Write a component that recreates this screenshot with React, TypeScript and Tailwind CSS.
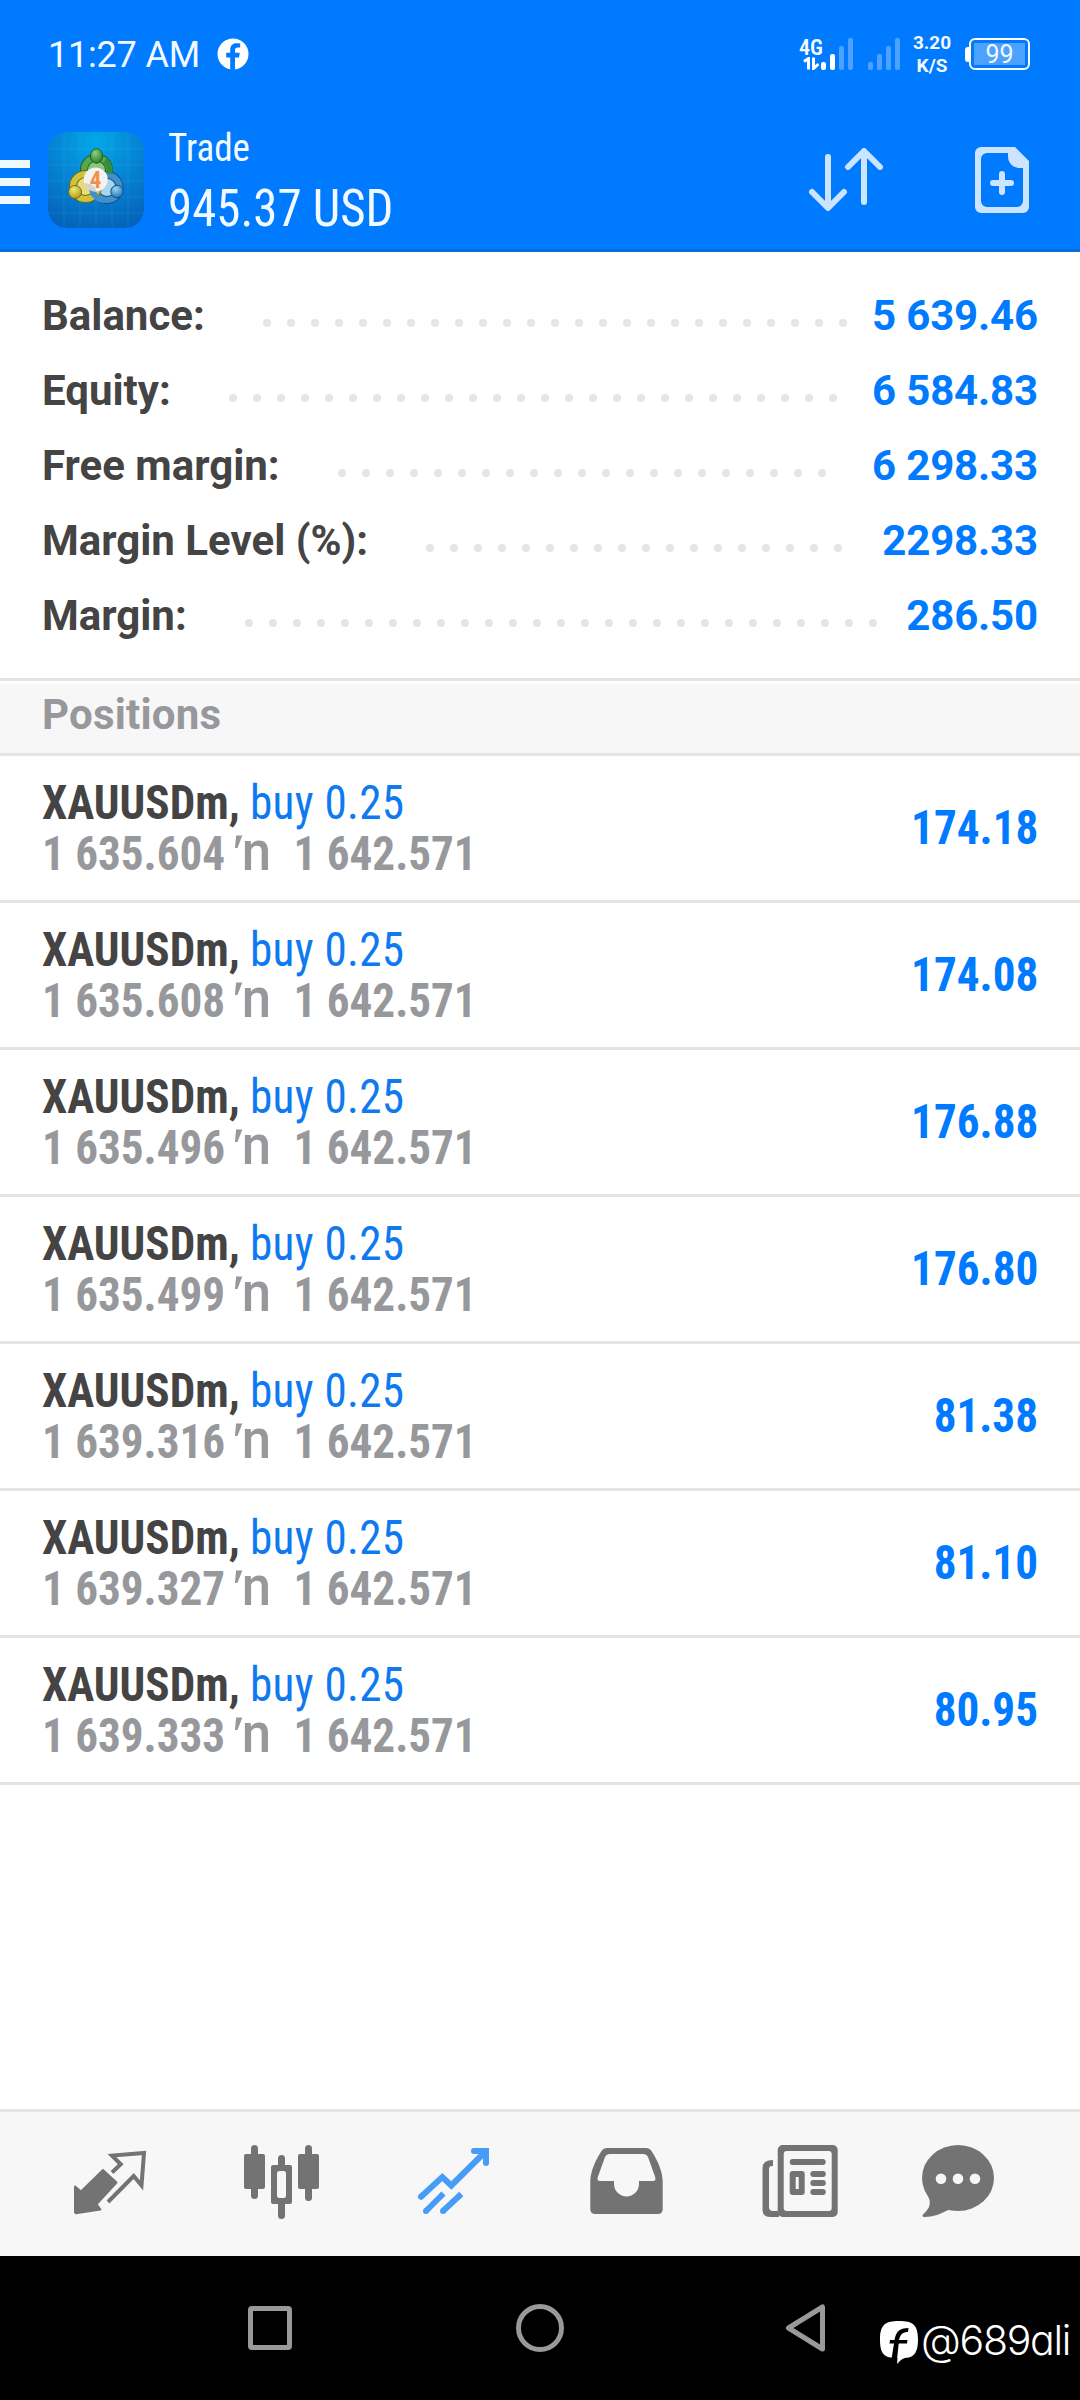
import type { ReactNode } from 'react'

interface AccountLine {
  label: string
  value: string
  dots: number
}

interface Position {
  open: string
  profit: string
}

const ACCOUNT: AccountLine[] = [
  { label: 'Balance:', value: '5 639.46', dots: 25 },
  { label: 'Equity:', value: '6 584.83', dots: 26 },
  { label: 'Free margin:', value: '6 298.33', dots: 21 },
  { label: 'Margin Level (%):', value: '2298.33', dots: 18 },
  { label: 'Margin:', value: '286.50', dots: 27 },
]

const POSITIONS: Position[] = [
  { open: '1 635.604', profit: '174.18' },
  { open: '1 635.608', profit: '174.08' },
  { open: '1 635.496', profit: '176.88' },
  { open: '1 635.499', profit: '176.80' },
  { open: '1 639.316', profit: '81.38' },
  { open: '1 639.327', profit: '81.10' },
  { open: '1 639.333', profit: '80.95' },
]

const CURRENT_PRICE = '1 642.571'

function SignalBars({ active }: { active: number }) {
  return (
    <svg width="32" height="32" viewBox="0 0 32 32">
      {[8, 16, 24, 32].map((h, i) => (
        <rect
          key={h}
          x={i * 9}
          y={32 - h}
          width="5"
          height={h}
          rx="2"
          fill={i < active ? '#fff' : '#4da2ff'}
        />
      ))}
    </svg>
  )
}

function StatusBar() {
  return (
    <div className="flex h-[108px] items-center pl-[48px] pr-[50px] text-[#f2f9ff]">
      <span className="pt-0.5 text-[36px] leading-[44px] tracking-[-0.2px]">11:27 AM</span>
      <svg className="ml-[17px]" width="32" height="32" viewBox="0 0 32 32">
        <circle cx="16" cy="16" r="15.5" fill="#fff" />
        <path
          d="M13.2 32V19.4H9.2v-4.6h4v-3.1c0-4.3 2.4-6.5 6.3-6.5 1.5 0 2.8.1 3.7.3v4.1h-2.4c-2.1 0-2.8 1.1-2.8 2.7v2.5h4.8l-.8 4.6h-4V32z"
          fill="#007aff"
        />
      </svg>

      <div className="ml-auto flex items-center">
        <div className="flex w-6 flex-col items-center">
          <span className="font-['Roboto_Condensed'] text-[22px] font-semibold leading-[19px]">
            4G
          </span>
          <svg width="16" height="13" viewBox="0 0 16 13" fill="none" stroke="#fff" strokeWidth="3">
            <path d="M1 4.5 5.5 1.5V12.5M10.5 .5V11.5L15.5 7" />
          </svg>
        </div>
        <div className="-ml-0.5 mr-[15px]">
          <SignalBars active={2} />
        </div>
        <SignalBars active={0} />
        <div className="ml-3 flex w-10 flex-col items-center text-[19px] font-bold leading-[23px]">
          <span>3.20</span>
          <span>K/S</span>
        </div>
        <div className="ml-[13px] flex items-center">
          <div className="h-[15px] w-1 rounded-l-[3px] bg-white" />
          <div className="flex h-8 w-[61px] rounded-[6px] border-[2.5px] border-white p-[3px]">
            <div className="flex flex-1 items-center justify-center bg-[#4da2ff] text-[25px] leading-none">
              99
            </div>
          </div>
        </div>
      </div>
    </div>
  )
}

function AppLogo() {
  return (
    <svg width="96" height="96" viewBox="0 0 96 96">
      <defs>
        <radialGradient id="tile" cx="0.5" cy="0.1" r="0.95">
          <stop offset="0" stopColor="#02a8ea" />
          <stop offset="0.5" stopColor="#0583d2" />
          <stop offset="1" stopColor="#0562b8" />
        </radialGradient>
        <radialGradient id="green" cx="0.4" cy="0.3" r="0.7">
          <stop offset="0" stopColor="#8fd07c" />
          <stop offset="1" stopColor="#2c7f2e" />
        </radialGradient>
        <radialGradient id="yellow" cx="0.4" cy="0.3" r="0.7">
          <stop offset="0" stopColor="#f0e878" />
          <stop offset="1" stopColor="#b39e1c" />
        </radialGradient>
        <radialGradient id="blue" cx="0.4" cy="0.3" r="0.7">
          <stop offset="0" stopColor="#9ad2f4" />
          <stop offset="1" stopColor="#2579b8" />
        </radialGradient>
      </defs>
      <rect width="96" height="96" rx="19" fill="url(#tile)" />
      <path
        d="M16 0V96M32 0V96M48 0V96M64 0V96M80 0V96M0 17H96M0 33H96M0 49H96M0 65H96M0 81H96"
        stroke="#5cc4ff"
        strokeOpacity="0.15"
      />
      <circle cx="48.5" cy="38" r="12.5" fill="#8cc47c" stroke="#1f6226" strokeWidth="8" />
      <circle cx="48.5" cy="38" r="12.5" fill="none" stroke="#55a84d" strokeWidth="6" />
      <circle cx="59" cy="55.5" r="12.5" fill="#a8d4ee" stroke="#14507f" strokeWidth="8" />
      <circle cx="59" cy="55.5" r="12.5" fill="none" stroke="#3f90cc" strokeWidth="6" />
      <circle cx="37.5" cy="54.5" r="12.5" fill="#e6dc78" stroke="#6f6a16" strokeWidth="8" />
      <circle cx="37.5" cy="54.5" r="12.5" fill="none" stroke="#cfc23c" strokeWidth="6" />
      <path d="M56 68a13 13 0 0 1-12-11" fill="none" stroke="#3f90cc" strokeWidth="6" />
      <path d="M57 28.5a12.5 12.5 0 0 1 4 13" fill="none" stroke="#368c38" strokeWidth="6" />
      <ellipse cx="48.5" cy="24" rx="6.2" ry="7.2" fill="url(#green)" stroke="#1f6226" />
      <circle cx="27" cy="60" r="6.5" fill="url(#yellow)" stroke="#6f6a16" />
      <circle cx="69" cy="59.5" r="6.2" fill="url(#blue)" stroke="#14507f" />
      <circle cx="47.7" cy="47.5" r="12" fill="#f4f2f0" />
      <path d="M36 51a12 12 0 0 0 12 8.5c0-5-5-8.5-12-8.5z" fill="#d4d2d0" />
      <text
        x="47.5"
        y="55.5"
        textAnchor="middle"
        fontFamily="Roboto Condensed"
        fontWeight="700"
        fontSize="23"
        fill="#f0914a"
      >
        4
      </text>
    </svg>
  )
}

function Toolbar() {
  return (
    <div className="flex h-36 items-start pr-[51px]">
      <div className="mt-[52px] flex w-[30px] flex-col gap-2.5">
        <div className="h-2 bg-[#f0f8ff]" />
        <div className="h-2 bg-[#f0f8ff]" />
        <div className="h-2 bg-[#f0f8ff]" />
      </div>
      <div className="ml-[18px] mt-6">
        <AppLogo />
      </div>
      <div className="ml-6 flex flex-col pt-3.5 font-['Roboto_Condensed'] text-[#f2faff]">
        <span className="origin-left scale-x-[0.95] text-[39px] leading-[52px]">Trade</span>
        <span className="origin-left scale-x-[0.94] whitespace-nowrap text-[52px] leading-[70px]">
          945.37 USD
        </span>
      </div>
      <svg
        className="ml-auto mt-10"
        width="74"
        height="64"
        viewBox="0 0 74 64"
        fill="none"
        stroke="#cce4ff"
        strokeWidth="6"
        strokeLinecap="round"
        strokeLinejoin="round"
      >
        <path d="M19 9V59M3 44l16 16 16-16M55 54V4M39 19 55 3l16 16" />
      </svg>
      <svg className="ml-[92px] mt-[39px]" width="54" height="66" viewBox="0 0 54 66">
        <path
          fill="#cce4ff"
          fillRule="evenodd"
          d="M6 0H40L54 14V60a6 6 0 0 1-6 6H6a6 6 0 0 1-6-6V6a6 6 0 0 1 6-6zM12 6a6 6 0 0 0-6 6V54a6 6 0 0 0 6 6H42a6 6 0 0 0 6-6V21H45c-7 0-12-5-12-12V6z"
        />
        <path d="M27 27V45M18 36H36" stroke="#cce4ff" strokeWidth="6" strokeLinecap="round" />
      </svg>
    </div>
  )
}

function AccountRow({ label, value, dots }: AccountLine) {
  return (
    <div className="flex h-[75px] items-center font-bold">
      <span>{label}</span>
      <div className="ml-[58px] mt-[15px] flex gap-4">
        {Array.from({ length: dots }, (_, i) => (
          <span key={i} className="size-2 rounded-full bg-[#e5e5e5]" />
        ))}
      </div>
      <span className="ml-auto tracking-[-0.15px] text-[#007aff]">{value}</span>
    </div>
  )
}

function PositionRow({ open, profit }: Position) {
  return (
    <div className="flex h-[147px] items-center justify-between border-b-[3px] border-[#e3e3e3] px-[42px] font-['Roboto_Condensed'] text-[48px] font-bold">
      <div className="origin-left scale-x-[0.94] whitespace-pre leading-[51px]">
        <div className="h-[51px] text-[#444]">
          XAUUSDm, <span className="font-normal tracking-[0.3px] text-[#0f7af0]">buy 0.25</span>
        </div>
        <div className="h-[51px] text-[#97989c]">
          {open}
          <span className="ml-[7px] font-[Roboto] leading-[0]">
            <span className="text-[52px]">ʹ</span>
            <span className="-ml-1 text-[56px] font-medium">n</span>
          </span>
          <span className="ml-[24px]">{CURRENT_PRICE}</span>
        </div>
      </div>
      <span className="origin-right scale-x-[0.94] text-[#007aff]">{profit}</span>
    </div>
  )
}

function TabIcon({ children }: { children: ReactNode }) {
  return (
    <svg width="172" height="144" viewBox="0 0 172 144" fill="#737373">
      {children}
    </svg>
  )
}

function TabBar() {
  return (
    <div className="flex h-[147px] border-t-[3px] border-[#e3e3e3] bg-[#f7f7f7] px-6">
      {/* Quotes */}
      <TabIcon>
        <path
          d="M51 74.5 57 79.5 79 58 92.5 70.5 72.5 92.2 76.5 97.5 52 101.2 51 100.5z"
          stroke="#737373"
          strokeWidth="2"
          strokeLinejoin="round"
        />
        <path
          d="M88 60.5 96.7 52.3 88 43.6 120 41 117.5 73.5 109.7 64 84 90"
          fill="none"
          stroke="#737373"
          strokeWidth="4"
        />
      </TabIcon>
      {/* Chart */}
      <TabIcon>
        <rect x="55" y="33" width="7" height="54" rx="3.5" />
        <rect x="48" y="42" width="21" height="35" rx="2" />
        <rect x="82" y="43" width="7" height="64" rx="3.5" />
        <rect x="75" y="53" width="21" height="39" rx="2" />
        <rect x="81" y="59" width="9" height="27" rx="2.5" fill="#f7f7f7" />
        <rect x="109" y="33" width="7" height="56" rx="3.5" />
        <rect x="102" y="42" width="21" height="35" rx="2" />
      </TabIcon>
      {/* Trade */}
      <TabIcon>
        <g fill="none" stroke="#479cf7" strokeWidth="6">
          <path d="M53 84.7 74.3 65 83.3 73.5 117 40" strokeLinecap="round" />
          <path d="M106 39H118V51" strokeLinecap="round" />
          <path d="M58 99 75.5 81.5M75 99 93.3 82" />
        </g>
        <path d="M112 36h9v9z" fill="#479cf7" />
        <circle cx="58" cy="99" r="3" fill="#479cf7" />
        <circle cx="75" cy="99" r="3" fill="#479cf7" />
      </TabIcon>
      {/* History */}
      <TabIcon>
        <path
          fillRule="evenodd"
          d="M67 36H106q3.5 0 5.5 3C118 49 122.7 60 122.7 70V97q0 5-5 5H55.3q-5 0-5-5V70C50.3 60 55 49 61.5 39q2-3 5.5-3zM70 42q-3.5 0-5 3L58 64.5q-1.5 4.5 2 4.5H74v3a12.5 12.5 0 0 0 25 0V69h14q3.5 0 2-4.5L108 45q-1.5-3-5-3z"
        />
      </TabIcon>
      {/* News */}
      <TabIcon>
        <path
          fillRule="evenodd"
          d="M70.7 33h50a5 5 0 0 1 5 5v62a5 5 0 0 1-5 5h-50a5 5 0 0 1-5-5V38a5 5 0 0 1 5-5zM74.7 39a3 3 0 0 0-3 3v54a3 3 0 0 0 3 3h42a3 3 0 0 0 3-3V42a3 3 0 0 0-3-3z"
        />
        <rect x="77.7" y="47" width="36" height="6" rx="3" />
        <path
          fillRule="evenodd"
          d="M80.7 59h9a3 3 0 0 1 3 3v18a3 3 0 0 1-3 3h-9a3 3 0 0 1-3-3V62a3 3 0 0 1 3-3zM83.7 65v12h3V65z"
        />
        <rect x="98.3" y="59" width="15.5" height="6" rx="3" />
        <rect x="98.3" y="68" width="15.5" height="6" rx="3" />
        <rect x="98.3" y="77" width="15.5" height="6" rx="3" />
        <path d="M61 48v6q-4-.5-4 3v38q0 4 4 4h6v6h-9q-7.5 0-7.5-7.5V56q0-8 10.5-8z" />
      </TabIcon>
      {/* Mailbox */}
      <TabIcon>
        <ellipse cx="74" cy="66" rx="36" ry="33" />
        <path d="M43 82C48 91 46 96 39.5 102q-2.5 3 1 3C49 105 57 102 66 97z" />
        <circle cx="57" cy="66.7" r="5.3" fill="#f7f7f7" />
        <circle cx="74" cy="66.7" r="5.3" fill="#f7f7f7" />
        <circle cx="91" cy="66.7" r="5.3" fill="#f7f7f7" />
      </TabIcon>
    </div>
  )
}

function NavBar() {
  return (
    <div className="relative flex h-36 items-center justify-around bg-black px-[135px]">
      <div className="size-11 rounded-[4px] border-[5px] border-[#999]" />
      <div className="size-12 -translate-x-px rounded-full border-[5px] border-[#999]" />
      <svg className="-translate-x-[5px]" width="42" height="48" viewBox="0 0 42 48">
        <path
          d="M3.5 24 37.5 3V45z"
          fill="none"
          stroke="#999"
          strokeWidth="5"
          strokeLinejoin="round"
        />
      </svg>

      <div className="absolute left-[880px] top-[62px] flex text-white">
        <svg className="mt-[3px]" width="38" height="43" viewBox="0 0 38 43">
          <path
            d="M19 0C33 0 38 4 38 18.5S33 36.5 25 37c-3 .5-5 2.5-8 6L17.5 37C4 37 0 33 0 18.5S5 0 19 0z"
            fill="#fff"
          />
          <path
            d="M11.5 38 14 22.5H9.5L10 19h4.5C16 11 19 7 28.5 7L28 11c-5 0-7.5 2-9 8h8.5l-.5 3.5h-8.3L16.5 43z"
            fill="#000"
          />
        </svg>
        <span className="ml-[3px] font-[Inter] text-[41px] font-light leading-[45px] tracking-[-1.3px] [font-feature-settings:'cv11']">
          @689ali
        </span>
      </div>
    </div>
  )
}

export default function App() {
  return (
    <div className="flex h-[2400px] w-[1080px] flex-col overflow-hidden bg-white font-[Roboto]">
      <header className="h-[252px] border-b-[3px] border-[#0a6edc] bg-[#007aff]">
        <StatusBar />
        <Toolbar />
      </header>

      <main className="flex-1">
        <section className="h-[426px] px-[42px] pt-[26px] text-[42px] text-[#444]">
          {ACCOUNT.map((line) => (
            <AccountRow key={line.label} {...line} />
          ))}
        </section>

        <div className="border-t-[3px] border-[#e3e3e3] pt-[3px]">
          <div className="h-[72px] border-b-[3px] border-[#e3e3e3] bg-[#f7f7f7] px-[42px] text-[42px] font-bold leading-[61px] tracking-[0.2px] text-[#97989c]">
            Positions
          </div>
        </div>

        {POSITIONS.map((position) => (
          <PositionRow key={position.open} {...position} />
        ))}
      </main>

      <TabBar />
      <NavBar />
    </div>
  )
}
